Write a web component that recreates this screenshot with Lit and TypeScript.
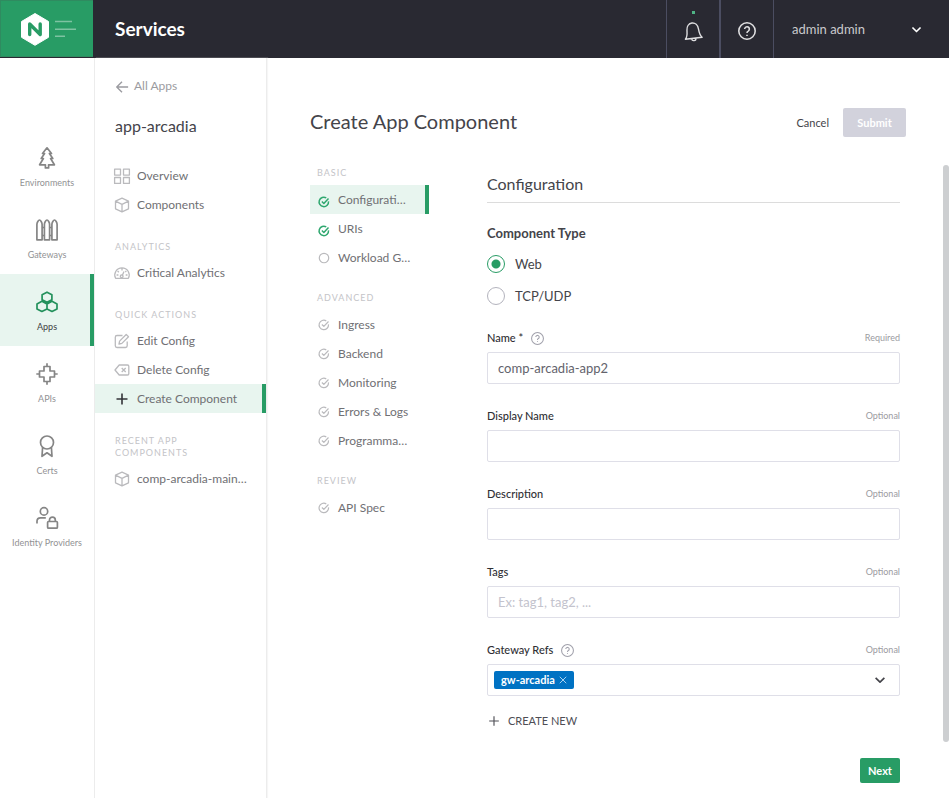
import { LitElement, html, css, svg, SVGTemplateResult } from "lit";
import { customElement, property, state } from "lit/decorators.js";
import { classMap } from "lit/directives/class-map.js";

const icons: Record<string, SVGTemplateResult> = {
  tree: svg`<path d="M11 .8 6.500 6.500h2.100L5.200 11.500h2.200L3.600 17.800H9.400V20.900h3.200v-3.100h5.800L14.600 11.500h2.200L13.400 6.500h2.100z"/>`,
  fence: svg`<path d="M.9 20.800V5.500C.9 3.500 2.500 1 3.500 1s2.600 2.500 2.600 4.500v15.300zM8.400 20.800V5.500C8.400 3.500 10 1 11 1s2.600 2.500 2.600 4.500v15.300zM15.900 20.800V5.500c0-2 1.600-4.500 2.600-4.500s2.600 2.500 2.600 4.500v15.300zM6.100 8.500h2.300M6.100 16.500h2.300M13.600 8.500h2.300M13.600 16.500h2.300"/>`,
  hexes: svg`<path d="M11 1.200l4.900 2.500v5.100L11 11.300 6.100 8.800V3.700zM5.900 10.300 11 12.900v5L5.900 20.500 1 17.900v-5zM16 10.300l5 2.600v5l-5 2.600-5-2.600v-5z"/>`,
  api: svg`<path d="M11 .3v3.200M11 18.500v3.200M.3 11h3.200M18.500 11h3.200M8 3.500h6V8h4.500v6H14v4.500H8V14H3.500V8H8z"/>`,
  cert: svg`<circle cx="11" cy="7.500" r="6.500"/><path d="M6.600 12.500 6 21.300 11 17.800l5 3.500-.6-8.800"/>`,
  identity: svg`<circle cx="8" cy="4.400" r="3.700"/><path d="M1 16.500v-2.300c0-2 1.500-3.400 3.500-3.400h5.300M13.500 14.500v-1.500a2.900 2.900 0 0 1 5.800 0v1.500"/><rect x="11.600" y="14.500" width="9.800" height="6.700" rx="1"/>`,
  grid: svg`<path d="M.6 1.200h5.900v5.900H.6zM9.500 1.200h5.900v5.900H9.500zM.6 9.500h5.900v5.900H.6zM9.500 9.500h5.900v5.900H9.500z"/>`,
  cube: svg`<path d="M8 1.200l6.500 3v7.600L8 14.900l-6.500-3.100V4.200zM1.500 4.200 8 7.300l6.500-3.100M8 7.300v7.600"/>`,
  gauge: svg`<path d="M1.600 13.300a7.200 7.200 0 1 1 12.800 0zM8 3.500v2M3.600 6l1.200 1.200M2.600 10h1.800M11.700 10h1.800M12.300 6l-1 1M8 11l2-4.500"/><circle cx="7.700" cy="11.300" r="1.400"/>`,
  edit: svg`<path d="M8.500 2.500h-5.500a1.700 1.700 0 0 0-1.700 1.700v8.600a1.700 1.700 0 0 0 1.700 1.700h8.500a1.700 1.700 0 0 0 1.700-1.700V8.500M5 11l.6-2.900 6.600-6.600 2.300 2.300-6.600 6.600z"/>`,
  erase: svg`<path d="M5.200 3h8.300a1.300 1.300 0 0 1 1.300 1.300v7.400a1.300 1.300 0 0 1-1.300 1.300H5.200L1 8zM7.700 6l4 4M11.700 6l-4 4"/>`,
  plus: svg`<path d="M8 2.500v11M2.500 8h11"/>`,
  back: svg`<path d="M15 8H2M8 2 2 8l6 6"/>`,
  done: svg`<path d="M14 7.200a6.300 6.300 0 1 1-3-4.700M5.200 7.300 7.800 9.900 14 3.300"/>`,
  open: svg`<circle cx="8" cy="8" r="6.300"/>`,
  help: svg`<circle cx="8" cy="8" r="7.300"/><path d="M5.900 6.300a2.100 2.100 0 1 1 3.200 1.800C8.300 8.500 8 8.900 8 9.700M8 11.300v1.100"/>`,
  bell: svg`<path d="M.6 16.300C3 13.800 3 11.500 3.200 7.600 3.400 3.600 5.800 1 9 1s5.600 2.600 5.800 6.600c.2 3.900.2 6.200 2.600 8.700zM6.900 16.600a2.100 2.100 0 0 0 4.200 0" transform="rotate(-7 9 10)"/>`,
  down: svg`<path d="M3 5.500l5 5 5-5"/>`,
  close: svg`<path d="M1.500 1.500l13 13M14.500 1.500l-13 13"/>`,
};

@customElement("ui-icon")
class UiIcon extends LitElement {
  @property() name = "";
  @property({ type: Number }) box = 16;
  static styles = css`
    :host { display: block; flex: none; width: 16px; height: 16px; }
    svg {
      display: block;
      width: 100%;
      height: 100%;
      fill: none;
      stroke: currentColor;
      stroke-width: var(--stroke, 1.3);
      stroke-linejoin: round;
      overflow: visible;
    }
  `;
  render() {
    return html`<svg viewBox="0 0 ${this.box} ${this.box}" aria-hidden="true">${icons[this.name]}</svg>`;
  }
}

interface Entry { label: string; icon: string; kind?: string }
interface Group { title?: string; items: Entry[] }

const rail: Entry[] = [
  { label: "Environments", icon: "tree" },
  { label: "Gateways", icon: "fence" },
  { label: "Apps", icon: "hexes", kind: "active" },
  { label: "APIs", icon: "api" },
  { label: "Certs", icon: "cert" },
  { label: "Identity Providers", icon: "identity" },
];

const menu: Group[] = [
  { items: [{ label: "Overview", icon: "grid" }, { label: "Components", icon: "cube" }] },
  { title: "Analytics", items: [{ label: "Critical Analytics", icon: "gauge" }] },
  {
    title: "Quick Actions",
    items: [
      { label: "Edit Config", icon: "edit" },
      { label: "Delete Config", icon: "erase" },
      { label: "Create Component", icon: "plus", kind: "active" },
    ],
  },
  { title: "Recent App Components", items: [{ label: "comp-arcadia-main…", icon: "cube" }] },
];

const steps: Group[] = [
  {
    title: "Basic",
    items: [
      { label: "Configurati…", icon: "done", kind: "active" },
      { label: "URIs", icon: "done", kind: "complete" },
      { label: "Workload G…", icon: "open" },
    ],
  },
  {
    title: "Advanced",
    items: ["Ingress", "Backend", "Monitoring", "Errors & Logs", "Programma…"].map((label) => ({ label, icon: "done" })),
  },
  { title: "Review", items: [{ label: "API Spec", icon: "done" }] },
];

@customElement("app-root")
class AppRoot extends LitElement {
  @state() private type = "Web";

  static styles = css`
    :host {
      --green: #289c65;
      --mint: #e8f5ef;
      --line: #dfdfe8;
      display: flex;
      flex-direction: column;
      min-height: 100vh;
      background: #fff;
      color: #44444a;
      font: 12px/16px Lato, "Liberation Sans", sans-serif;
    }
    * { box-sizing: border-box; }
    a { color: inherit; text-decoration: none; }
    button, input, select { font: inherit; color: inherit; margin: 0; }
    button { border: 0; background: none; padding: 0; cursor: pointer; }
    h1, h2, h3, p, fieldset, legend { margin: 0; padding: 0; border: 0; font-weight: 400; }

    .top { display: flex; height: 58px; background: #292932; color: #fff; }
    .brand {
      width: 93px;
      margin-bottom: 1px;
      background: var(--green);
      border: 1px solid #2f8b60;
      border-right: 0;
    }
    .brand svg { display: block; width: 92px; height: 55px; }
    .product { flex: 1; padding-left: 22px; font-size: 19px; line-height: 58px; font-weight: 700; }
    .tool {
      display: flex;
      align-items: center;
      justify-content: center;
      position: relative;
      width: 53px;
      border-left: 1px solid #4b4d61;
      color: #dedee0;
    }
    .tool.wide { width: 54px; border-left-width: 2px; }
    .tool ui-icon { width: 18px; height: 18px; margin-top: 3px; --stroke: 1.4; }
    .dot { position: absolute; top: 11px; left: 25px; width: 3px; height: 3px; background: #4fb386; }
    .user {
      display: flex;
      align-items: center;
      justify-content: space-between;
      width: 176px;
      padding: 0 26px 0 18px;
      border-left: 1px solid #4b4d61;
      color: #c9c9cd;
      font-size: 13px;
    }
    .user ui-icon { width: 13px; height: 13px; color: #fff; --stroke: 2; }

    .frame { display: flex; flex: 1; }
    .rail { width: 95px; padding-top: 72px; border-right: 1px solid #ececec; }
    .rail a {
      display: flex;
      flex-direction: column;
      align-items: center;
      gap: 7px;
      height: 72px;
      padding-top: 17px;
      color: #929294;
      font-size: 9px;
      line-height: 14px;
      white-space: nowrap;
    }
    .rail ui-icon { width: 22px; height: 22px; color: #858585; --stroke: 1.7; }
    .rail .active { border-right: 4px solid var(--green); padding-left: 4px; background: var(--mint); color: #3e3e42; }
    .rail .active ui-icon { color: #23915c; }

    .side { width: 172px; padding-top: 20px; border-right: 1px solid #ececec; box-shadow: 1px 0 1px #f6f6f6; }
    .back { display: flex; gap: 5px; padding-left: 20px; color: #9b9ba0; line-height: 16px; font-size: 12px; }
    .back ui-icon { width: 14px; height: 14px; margin-top: 2px; --stroke: 1.6; }
    .app { padding: 22px 20px 25px; font-size: 16px; line-height: 20px; }
    .caption {
      color: #c4c4c8;
      font-size: 9px;
      line-height: 12px;
      letter-spacing: 1px;
      text-transform: uppercase;
    }
    .side .caption { width: 120px; margin: 22px 0 5px 20px; }
    .entry { display: flex; align-items: center; height: 29px; color: #707074; white-space: nowrap; }
    .side .entry { gap: 7px; padding-left: 19px; }
    .entry ui-icon { color: #bababd; }
    .entry.active { background: var(--mint); border-right: 4px solid var(--green); }
    .side .active ui-icon { color: #333338; --stroke: 1.6; }

    .main { flex: 1; min-width: 0; padding-top: 50px; }
    .title { display: flex; align-items: center; padding: 0 43px; margin-bottom: 28px; }
    .title h1 { flex: 1; padding-bottom: 3px; font-size: 20px; line-height: 26px; }
    .cancel { margin-right: 14px; font-size: 11px; }
    .submit {
      width: 63px;
      height: 29px;
      border-radius: 2px;
      background: #d2d2dc;
      color: #fff;
      font-size: 11px;
      font-weight: 700;
    }
    .body { display: flex; }
    .steps { width: 119px; margin: 2px 58px 0 43px; }
    .steps .caption { margin: 20px 0 6px 7px; }
    .steps .caption:first-child { margin-top: 0; }
    .steps .entry { gap: 8px; padding-left: 8px; }
    .steps ui-icon { width: 12px; height: 12px; --stroke: 1.6; }
    .steps .active ui-icon, .steps .complete ui-icon { color: #2fa76f; margin-top: 5px; --stroke: 2; }

    .form { flex: 1; min-width: 0; margin-right: 43px; padding-bottom: 10px; }
    .form h2 { height: 38px; padding-top: 9px; border-bottom: 1px solid #dcdcdc; font-size: 16px; line-height: 20px; }
    .types { padding: 20px 0 16px; }
    legend { float: left; width: 100%; margin-bottom: 5px; font-size: 13px; line-height: 20px; font-weight: 700; }
    .choice { display: flex; clear: both; align-items: center; gap: 10px; height: 32px; font-size: 13px; }
    .choice input {
      appearance: none;
      width: 18px;
      height: 18px;
      border: 1px solid #b3b3bd;
      border-radius: 50%;
      background: #fff;
    }
    .choice input:checked { border-color: var(--green); background: radial-gradient(circle, var(--green) 4px, #fff 5px); }
    .field { margin-bottom: 22px; }
    .label { display: flex; align-items: center; gap: 8px; height: 20px; margin-bottom: 4px; font-size: 11px; font-weight: 500; color: #2f2f34; }
    .label ui-icon { width: 13px; height: 13px; color: #a0a0ab; }
    .note { margin-left: auto; color: #9b9b9f; font-size: 9px; font-weight: 400; }
    .text, .picker { display: block; width: 100%; height: 32px; border: 1px solid var(--line); border-radius: 2px; background: #fff; }
    .text { padding: 0 10px; font-size: 13px; color: #63636c; }
    .text::placeholder { color: #c3c3cd; opacity: 1; }
    .picker { display: flex; align-items: center; padding: 0 12px 0 6px; }
    .chip { display: flex; align-items: center; gap: 4px; height: 18px; padding: 0 7px; border-radius: 2px; background: #0072c3; color: #fff; font-size: 11px; font-weight: 700; }
    .chip ui-icon { width: 8px; height: 8px; color: #a9d2f0; --stroke: 2; }
    .picker select { flex: 1; min-width: 0; height: 30px; border: 0; background: none; appearance: none; }
    .picker > ui-icon { width: 14px; height: 14px; --stroke: 1.9; }
    .field:last-of-type { margin-bottom: 14px; }
    .create { display: flex; align-items: center; gap: 7px; height: 22px; font-size: 11px; color: #4e4e55; }
    .create ui-icon { width: 14px; height: 14px; --stroke: 1.3; }
    .thumb { width: 6px; border-radius: 3px; background: #cdcfd1; }
    .foot { display: flex; justify-content: flex-end; padding: 16px 49px 15px; }
    .next { width: 40px; height: 25px; border-radius: 2px; background: var(--green); color: #fff; font-size: 11px; font-weight: 700; }
  `;

  private groups(list: Group[]) {
    return list.map(
      (g) => html`${g.title ? html`<h3 class="caption">${g.title}</h3>` : ""}${g.items.map(
        (i) => html`<a href="#" class=${classMap({ entry: true, [i.kind ?? "idle"]: true })}
          ><ui-icon name=${i.icon}></ui-icon>${i.label}</a>`
      )}`
    );
  }

  private field(id: string, label: string, note: string, value = "", placeholder = "", help = false) {
    return html`<div class="field">
      <div class="label">
        <label for=${id}>${label}</label>${help ? html`<ui-icon name="help"></ui-icon>` : ""}
        <span class="note">${note}</span>
      </div>
      <input class="text" id=${id} type="text" .value=${value} placeholder=${placeholder} />
    </div>`;
  }

  render() {
    return html`
      <header class="top">
        <a class="brand" href="#" aria-label="Home">
          <svg viewBox="1 1 92 55">
            <path fill="#fff" stroke="#fff" stroke-linejoin="round" d="M35 13.500l13.500 8v15.800L35 45.300l-13.500-8V21.500z" />
            <path fill="none" stroke="#289c65" stroke-width="3.400" stroke-linecap="round" stroke-linejoin="round" d="M29.700 34.500V24L40.200 34.500V24" />
            <path fill="none" stroke="#fff" stroke-opacity=".4" stroke-width="1.500" d="M55 21.500h17M55 29.200h21M55 36.200h10" />
          </svg>
        </a>
        <div class="product">Services</div>
        <button class="tool" aria-label="Notifications"><span class="dot"></span><ui-icon name="bell" box="18"></ui-icon></button>
        <button class="tool wide" aria-label="Help"><ui-icon name="help"></ui-icon></button>
        <button class="user">admin admin<ui-icon name="down"></ui-icon></button>
      </header>
      <div class="frame">
        <nav class="rail">
          ${rail.map((r) => html`<a href="#" class=${r.kind ?? ""}><ui-icon name=${r.icon} box="22"></ui-icon>${r.label}</a>`)}
        </nav>
        <nav class="side">
          <a class="back" href="#"><ui-icon name="back"></ui-icon>All Apps</a>
          <h2 class="app">app-arcadia</h2>
          ${this.groups(menu)}
        </nav>
        <main class="main">
          <div class="title">
            <h1>Create App Component</h1>
            <button class="cancel">Cancel</button>
            <button class="submit" disabled>Submit</button>
          </div>
          <div class="body">
            <nav class="steps">${this.groups(steps)}</nav>
            <form class="form">
              <h2>Configuration</h2>
              <fieldset class="types">
                <legend>Component Type</legend>
                ${["Web", "TCP/UDP"].map(
                  (t) => html`<label class="choice"
                    ><input type="radio" name="type" .checked=${this.type === t} @change=${() => (this.type = t)} />${t}</label>`
                )}
              </fieldset>
              ${this.field("name", "Name *", "Required", "comp-arcadia-app2", "", true)}
              ${this.field("display", "Display Name", "Optional")}
              ${this.field("description", "Description", "Optional")}
              ${this.field("tags", "Tags", "Optional", "", "Ex: tag1, tag2, ...")}
              <div class="field">
                <div class="label">
                  <label for="gateway">Gateway Refs</label><ui-icon name="help"></ui-icon>
                  <span class="note">Optional</span>
                </div>
                <div class="picker">
                  <span class="chip">gw-arcadia<button type="button" aria-label="Remove gw-arcadia"><ui-icon name="close"></ui-icon></button></span>
                  <select id="gateway"><option></option></select>
                  <ui-icon name="down"></ui-icon>
                </div>
              </div>
              <button type="button" class="create"><ui-icon name="plus"></ui-icon>CREATE NEW</button>
            </form>
            <div class="thumb"></div>
          </div>
          <footer class="foot"><button class="next">Next</button></footer>
        </main>
      </div>
    `;
  }
}
